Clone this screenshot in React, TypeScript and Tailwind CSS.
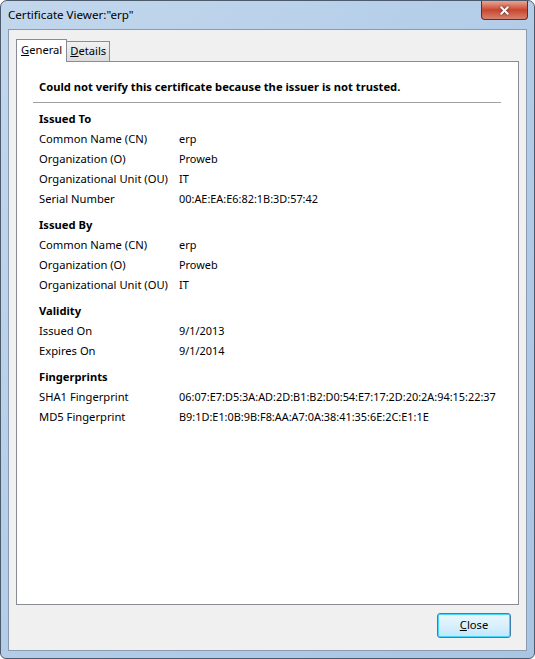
import { X } from "lucide-react";

type Row = { label: string; value: string };

const sections: { title: string; rows: Row[] }[] = [
  {
    title: "Issued To",
    rows: [
      { label: "Common Name (CN)", value: "erp" },
      { label: "Organization (O)", value: "Proweb" },
      { label: "Organizational Unit (OU)", value: "IT" },
      { label: "Serial Number", value: "00:AE:EA:E6:82:1B:3D:57:42" },
    ],
  },
  {
    title: "Issued By",
    rows: [
      { label: "Common Name (CN)", value: "erp" },
      { label: "Organization (O)", value: "Proweb" },
      { label: "Organizational Unit (OU)", value: "IT" },
    ],
  },
  {
    title: "Validity",
    rows: [
      { label: "Issued On", value: "9/1/2013" },
      { label: "Expires On", value: "9/1/2014" },
    ],
  },
  {
    title: "Fingerprints",
    rows: [
      { label: "SHA1 Fingerprint", value: "06:07:E7:D5:3A:AD:2D:B1:B2:D0:54:E7:17:2D:20:2A:94:15:22:37" },
      { label: "MD5 Fingerprint", value: "B9:1D:E1:0B:9B:F8:AA:A7:0A:38:41:35:6E:2C:E1:1E" },
    ],
  },
];

const App = () => {
  return (
    <div className="w-[535px] h-[659px] font-['Noto_Sans',sans-serif] text-[11.2px] text-black">
      <div className="w-full h-full flex flex-col rounded-t-[7px] rounded-b-[6px] border border-[#4d5a6b] bg-gradient-to-br from-[#c2d7ec] via-[#b3cde8] to-[#a9c5e4] px-[7px] pb-[7px]">
        {/* title bar */}
        <div className="h-[28px] flex items-start justify-between">
          <span className="pt-[6px] leading-[16px] text-[11.6px]">Certificate Viewer:"erp"</span>
          <button className="mr-[-1px] w-[47px] h-[19px] rounded-b-[4px] border border-t-0 border-[#6b2a24] bg-gradient-to-b from-[#e8a493] via-[#c9442e] to-[#d5826f] flex items-center justify-center">
            <X size={13} strokeWidth={3.5} className="text-white drop-shadow-[0_0_1px_#333]" />
          </button>
        </div>

        {/* client area */}
        <div className="flex-1 flex flex-col border border-[#8a9bb0] bg-[#f0f0f0] px-[7px] pt-[8px]">
          <div className="flex items-end h-[23px]">
            <div className="h-[23px] px-[4px] border border-b-0 border-[#898c95] bg-white flex items-center relative z-10 mb-[-1px] pb-[1px]">
              <span><u>G</u>eneral</span>
            </div>
            <div className="h-[20px] px-[3px] border border-l-0 border-b-0 border-[#898c95] bg-gradient-to-b from-[#f2f2f2] to-[#dcdcdc] flex items-center">
              <span><u>D</u>etails</span>
            </div>
          </div>

          <div className="h-[544px] border border-[#898c95] bg-white pl-[16px] pr-[17px] pt-[17px]">
            <div className="font-bold leading-[16px] pl-[6px]">Could not verify this certificate because the issuer is not trusted.</div>
            <div className="h-px bg-[#a0a0a0] mt-[7px]" />
            <div className="pl-[6px] pt-[6px]">
              {sections.map((s) => (
                <div key={s.title} className="mb-[6px]">
                  <div className="font-bold h-[20px] leading-[20px]">{s.title}</div>
                  {s.rows.map((r) => (
                    <div key={r.label} className="flex h-[20px] leading-[20px]">
                      <span className="w-[140px] shrink-0 whitespace-nowrap">{r.label}</span>
                      <span className="whitespace-nowrap text-[10.9px]">{r.value}</span>
                    </div>
                  ))}
                </div>
              ))}
            </div>
          </div>

          <div className="flex justify-end pt-[8px] pr-[8px]">
            <button className="w-[74px] h-[25px] rounded-[3px] border border-[#3c7fb1] shadow-[inset_0_0_0_1px_#48d5fb] bg-gradient-to-b from-[#eaf6fd] via-[#d9f0fc] to-[#bee6fd] flex items-center justify-center">
              <span><u>C</u>lose</span>
            </button>
          </div>
        </div>
      </div>
    </div>
  );
};

export default App;
